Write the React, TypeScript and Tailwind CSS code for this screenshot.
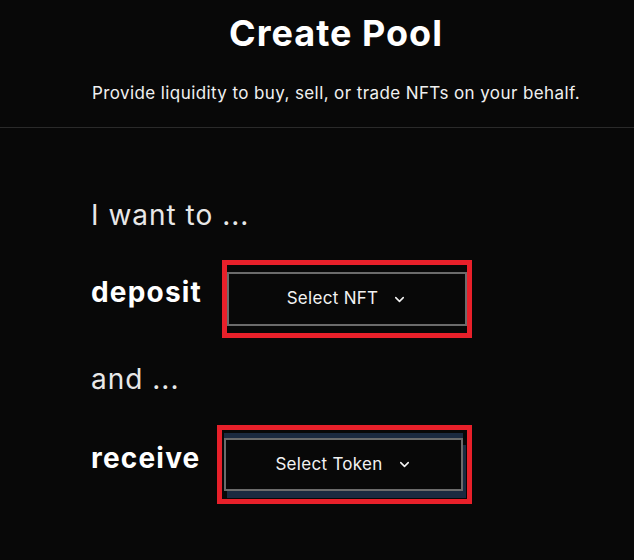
import { ChevronDown } from "lucide-react";

function SelectButton({ label, className }: { label: string; className: string }) {
  return (
    <button
      className={`flex items-center justify-center gap-[14px] border-2 border-[#6b6b6b] bg-[#080808] text-[17px] tracking-[0.3px] text-[#f2f2f2] ${className}`}
    >
      <span>{label}</span>
      <ChevronDown size={15} strokeWidth={2.5} />
    </button>
  );
}

export default function App() {
  return (
    <div className="min-h-screen bg-[#080808] text-white font-['Inter',sans-serif]">
      {/* Header */}
      <header className="pt-[13px] pl-[38px] text-center">
        <h1 className="text-[36px] leading-[40px] font-bold tracking-[1px]">Create Pool</h1>
        <p className="mt-[28px] text-[17px] leading-[24px] tracking-[0.4px] text-[#f0f0f0]">
          Provide liquidity to buy, sell, or trade NFTs on your behalf.
        </p>
      </header>

      <div className="mt-[22px] h-px bg-[#2a2a2a]" />

      {/* Form */}
      <main className="pl-[91px] pt-[69px]">
        <p className="text-[28px] leading-[36px] tracking-[1px] text-[#e8e8e8]">I want to ...</p>

        <div className="mt-[27px] flex items-center">
          <span className="w-[131px] mb-[14px] text-[28px] leading-[36px] font-bold tracking-[1.2px]">deposit</span>
          <div className="border-[5px] border-[#e8202a] py-[7px]">
            <SelectButton label="Select NFT" className="w-[240px] h-[54px]" />
          </div>
        </div>

        <p className="mt-[23px] text-[28px] leading-[36px] tracking-[1px] text-[#e8e8e8]">and ...</p>

        <div className="mt-[28px] flex items-center">
          <span className="w-[126px] mb-[14px] text-[28px] leading-[36px] font-bold tracking-[1.2px]">receive</span>
          <div className="border-[5px] border-[#e8202a] pl-[2px] pr-[4px] py-[8px]">
            <SelectButton
              label="Select Token"
              className="w-[239px] h-[53px] shadow-[0_-5px_0_0_#1b2a40,3px_7px_0_0_#1b2a40]"
            />
          </div>
        </div>
      </main>
    </div>
  );
}
